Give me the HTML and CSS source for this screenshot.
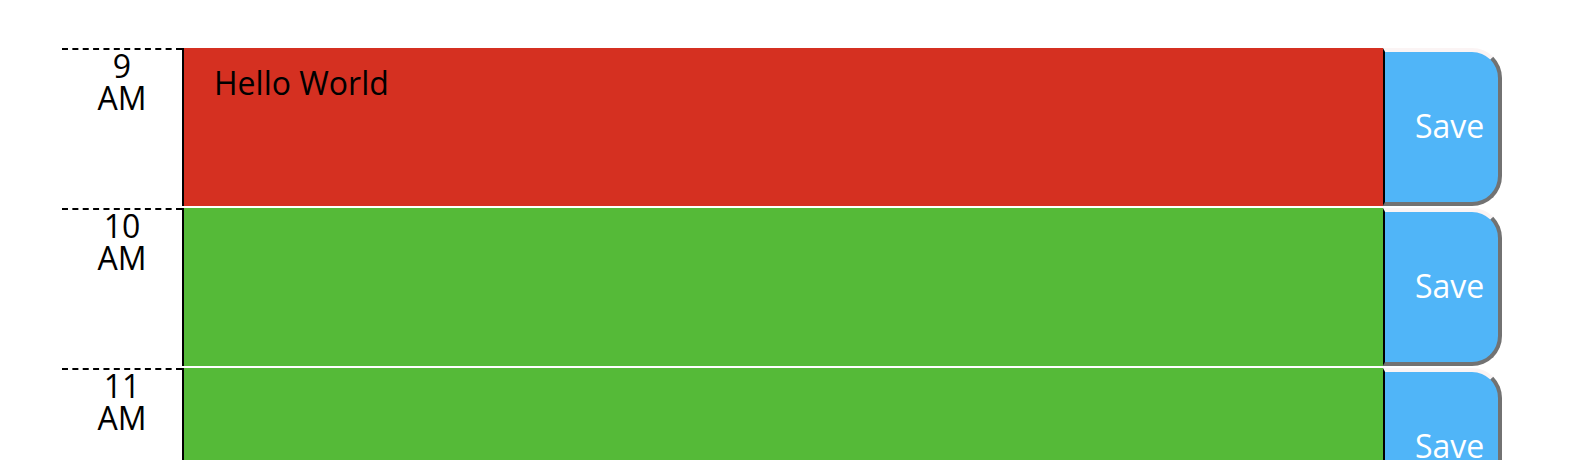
FILE: index.html
```html
<!DOCTYPE html>
<html lang="en">
<head>
<meta charset="utf-8">
<title>Work Day Scheduler</title>
<link rel="stylesheet" href="styles.css">
</head>
<body>
<main class="schedule">
  <div class="time-row">
    <div class="hour">9
AM</div>
    <div class="description present">Hello World</div>
    <button class="save-btn">Save</button>
  </div>
  <div class="time-row">
    <div class="hour">10
AM</div>
    <div class="description future"></div>
    <button class="save-btn">Save</button>
  </div>
  <div class="time-row">
    <div class="hour">11
AM</div>
    <div class="description future"></div>
    <button class="save-btn">Save</button>
  </div>
</main>
</body>
</html>
```

FILE: styles.css
```css
html, body {
  margin: 0;
  padding: 0;
  background: #ffffff;
}

body {
  font-family: "Open Sans", "DejaVu Sans", sans-serif;
  font-size: 32px;
  line-height: 1;
  color: #000000;
  overflow: hidden;
}

.schedule {
  padding-top: 46px;
  margin-left: 62px;
  width: 1440px;
}

.time-row {
  display: flex;
  box-sizing: border-box;
  height: 160px;
  border-top: 2px solid #ffffff;
}

.hour {
  box-sizing: border-box;
  flex: 0 0 120px;
  border-top: 2px dashed #000000;
  padding: 0 30px;
  text-align: center;
  white-space: pre-wrap;
  background: #ffffff;
}

.description {
  box-sizing: border-box;
  flex: 0 0 1201px;
  border-left: 2px solid #000000;
  padding: 19px 30px;
  white-space: pre-wrap;
  color: #000000;
}

.present {
  background-color: #d53021;
}

.future {
  background-color: #55ba38;
}

.save-btn {
  box-sizing: border-box;
  flex: 0 0 119px;
  margin: 0;
  padding: 0 0 3px 30px;
  text-align: left;
  font-family: "Open Sans", "DejaVu Sans", sans-serif;
  font-size: 32px;
  line-height: 1;
  color: #ffffff;
  background-color: #50b5f8;
  border-style: solid;
  border-width: 4px 4px 4px 2px;
  border-color: #fbf4f4 #727272 #727272 #000000;
  border-top-right-radius: 30px;
  border-bottom-right-radius: 30px;
}
```
